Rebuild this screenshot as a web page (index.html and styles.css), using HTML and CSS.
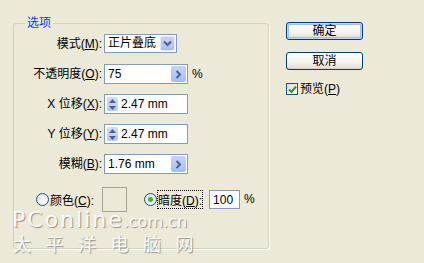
FILE: index.html
```html
<!DOCTYPE html>
<html lang="zh-CN">
<head>
<meta charset="utf-8">
<link rel="stylesheet" href="styles.css">
</head>
<body>
<div class="dialog">
  <div class="group">
    <span class="legend">选项</span>
    <div class="form">
      <label class="lbl">模式(<u>M</u>):</label>
      <div class="combo"><span class="combo-text">正片叠底</span><span class="combo-btn"><svg width="9" height="7" viewBox="0 0 9 7"><path d="M1 1.5 L4.5 5 L8 1.5" fill="none" stroke="#4D6185" stroke-width="2"/></svg></span></div>

      <label class="lbl">不透明度(<u>O</u>):</label>
      <div class="ctl"><div class="field w84"><span class="val">75</span><span class="pop"><svg width="7" height="9" viewBox="0 0 7 9"><path d="M1.5 1 L5 4.5 L1.5 8" fill="none" stroke="#4D6185" stroke-width="2"/></svg></span></div><span class="pct">%</span></div>

      <label class="lbl">X 位移(<u>X</u>):</label>
      <div class="ctl"><div class="field w84"><span class="spin"><svg width="9" height="13" viewBox="0 0 9 13"><path d="M4.5 1 L8 5 L1 5 Z M4.5 12 L8 8 L1 8 Z" fill="#4D6185"/></svg></span><span class="val">2.47 mm</span></div></div>

      <label class="lbl">Y 位移(<u>Y</u>):</label>
      <div class="ctl"><div class="field w84"><span class="spin"><svg width="9" height="13" viewBox="0 0 9 13"><path d="M4.5 1 L8 5 L1 5 Z M4.5 12 L8 8 L1 8 Z" fill="#4D6185"/></svg></span><span class="val">2.47 mm</span></div></div>

      <label class="lbl">模糊(<u>B</u>):</label>
      <div class="ctl"><div class="field w84"><span class="val">1.76 mm</span><span class="pop"><svg width="7" height="9" viewBox="0 0 7 9"><path d="M1.5 1 L5 4.5 L1.5 8" fill="none" stroke="#4D6185" stroke-width="2"/></svg></span></div></div>
    </div>
    <div class="radio-row">
      <span class="radio"></span>
      <span class="rlabel">颜色(<u>C</u>):</span>
      <span class="swatch"></span>
      <span class="radio checked"></span>
      <span class="rlabel focus">暗度(<u>D</u>):</span>
      <div class="field w31"><span class="val">100</span></div>
      <span class="pct">%</span>
    </div>
    <div class="watermark">
      <div class="wm1">PConline<span class="wm-small">.com.cn</span></div>
      <div class="wm2">太平洋电脑网</div>
    </div>
  </div>
  <div class="side">
    <button class="btn default">确定</button>
    <button class="btn">取消</button>
    <div class="check-row"><span class="check"><svg width="9" height="9" viewBox="0 0 9 9"><path d="M1 4.5 L3.5 7 L8 1.5" fill="none" stroke="#21A121" stroke-width="2"/></svg></span><span>预览(<u>P</u>)</span></div>
  </div>
</div>
</body>
</html>
```
FILE: styles.css
```css
html, body {
  margin: 0;
  padding: 0;
  background: #ECE9D8;
}
body {
  width: 424px;
  height: 263px;
  overflow: hidden;
  font-family: Tahoma, "Liberation Sans", "Noto Sans CJK SC", sans-serif;
  font-size: 12px;
  color: #000;
}
u { text-decoration: underline; text-underline-offset: 1px; }
.dialog {
  display: flex;
  align-items: flex-start;
  padding: 22px 0 0 13px;
}
.group {
  position: relative;
  box-sizing: border-box;
  width: 256px;
  height: 226px;
  margin-top: 1px;
  border: 1px solid #D0D0BF;
  border-radius: 3px;
  box-shadow: 1px 1px 0 #FFFFFF;
  padding: 10px 0 0 0;
}
.legend {
  position: absolute;
  left: 11px;
  top: -9px;
  padding: 0 2px;
  background: #ECE9D8;
  color: #0046D5;
  line-height: 16px;
}
.form {
  display: grid;
  grid-template-columns: 88px auto;
  column-gap: 2px;
  row-gap: 10px;
  grid-auto-rows: 20px;
}
.lbl {
  text-align: right;
  line-height: 20px;
  white-space: nowrap;
}
.ctl {
  display: flex;
  align-items: center;
  gap: 4px;
}
.combo {
  box-sizing: border-box;
  width: 73px;
  height: 19px;
  border: 1px solid #7F9DB9;
  background: #fff;
  display: flex;
  align-items: stretch;
}
.combo-text {
  flex: 1;
  padding-left: 3px;
  line-height: 17px;
}
.combo-btn {
  width: 15px;
  margin: 1px;
  border-radius: 2px;
  background: linear-gradient(#C6D3F7, #B4C8F6 60%, #A6BCEF);
  border: 1px solid #E3EBFC;
  box-sizing: border-box;
  display: flex;
  align-items: center;
  justify-content: center;
}
.field {
  box-sizing: border-box;
  height: 20px;
  border: 1px solid #7F9DB9;
  background: #fff;
  display: flex;
  align-items: stretch;
}
.w84 { width: 84px; }
.w31 { width: 31px; height: 19px; }
.val {
  flex: 1;
  padding-left: 3px;
  line-height: 18px;
  white-space: nowrap;
}
.pop {
  width: 15px;
  margin: 1px;
  border-radius: 2px;
  background: linear-gradient(#C6D3F7, #B4C8F6 60%, #A6BCEF);
  display: flex;
  align-items: center;
  justify-content: center;
}
.spin {
  width: 11px;
  margin: 2px 0 2px 2px;
  border-radius: 2px;
  background: linear-gradient(#D2DDF9, #B4C8F6);
  display: flex;
  align-items: center;
  justify-content: center;
}
.spin + .val { padding-left: 3px; }
.radio-row {
  display: flex;
  align-items: center;
  margin-top: 13px;
  padding-left: 22px;
  height: 24px;
}
.radio {
  box-sizing: border-box;
  width: 13px;
  height: 13px;
  border: 1px solid #1C5180;
  border-radius: 50%;
  background: radial-gradient(circle at 65% 65%, #FFFFFF, #DCDCD6);
  margin-right: 1px;
}
.radio.checked {
  margin-left: 17px;
  background: radial-gradient(circle, #3EB33E 0 2px, #A8DBA8 2.5px, transparent 3.5px), radial-gradient(circle at 65% 65%, #FFFFFF, #DCDCD6);
}
.rlabel { white-space: nowrap; }
.rlabel.focus {
  outline: 1px dotted #000;
  outline-offset: 0;
  margin-right: 7px;
}
.swatch {
  box-sizing: border-box;
  width: 25px;
  height: 25px;
  margin-left: 8px;
  border: 1px solid #A5A597;
  background: #ECE9D8;
}
.radio-row .field { margin-right: 4px; }
.watermark {
  position: absolute;
  left: -2px;
  top: 186px;
  color: rgba(255, 255, 255, 0.92);
  text-shadow: 1px 1px 1px rgba(110, 110, 100, 0.7);
  pointer-events: none;
  white-space: nowrap;
}
.wm1 {
  font-family: "DejaVu Sans", sans-serif;
  font-size: 22px;
  line-height: 20px;
  letter-spacing: 2px;
}
.wm-small {
  font-size: 16px;
  letter-spacing: 0;
}
.wm2 {
  font-family: "Noto Sans CJK SC", sans-serif;
  font-size: 18px;
  line-height: 22px;
  letter-spacing: 14.5px;
  margin-left: 1px;
}
.side {
  display: flex;
  flex-direction: column;
  align-items: flex-start;
  margin-left: 17px;
}
.btn {
  box-sizing: border-box;
  width: 77px;
  height: 18px;
  padding: 0;
  border: 1px solid #003C74;
  border-radius: 3px;
  background: linear-gradient(#FFFFFF, #F4F3EE 60%, #E3E1D6 90%, #D6D0C5);
  font: inherit;
  line-height: 16px;
  color: #000;
  margin-bottom: 12px;
}
.btn.default {
  box-shadow: inset 0 0 0 1px #C2D4F6, inset 0 0 0 2px #A4BDEF;
}
.check-row {
  display: flex;
  align-items: center;
  gap: 2px;
  line-height: 14px;
  margin-top: 0;
}
.check {
  box-sizing: border-box;
  width: 12px;
  height: 12px;
  border: 1px solid #1C5180;
  background: linear-gradient(135deg, #DCDCD6, #FFFFFF);
  display: flex;
  align-items: center;
  justify-content: center;
}
```
